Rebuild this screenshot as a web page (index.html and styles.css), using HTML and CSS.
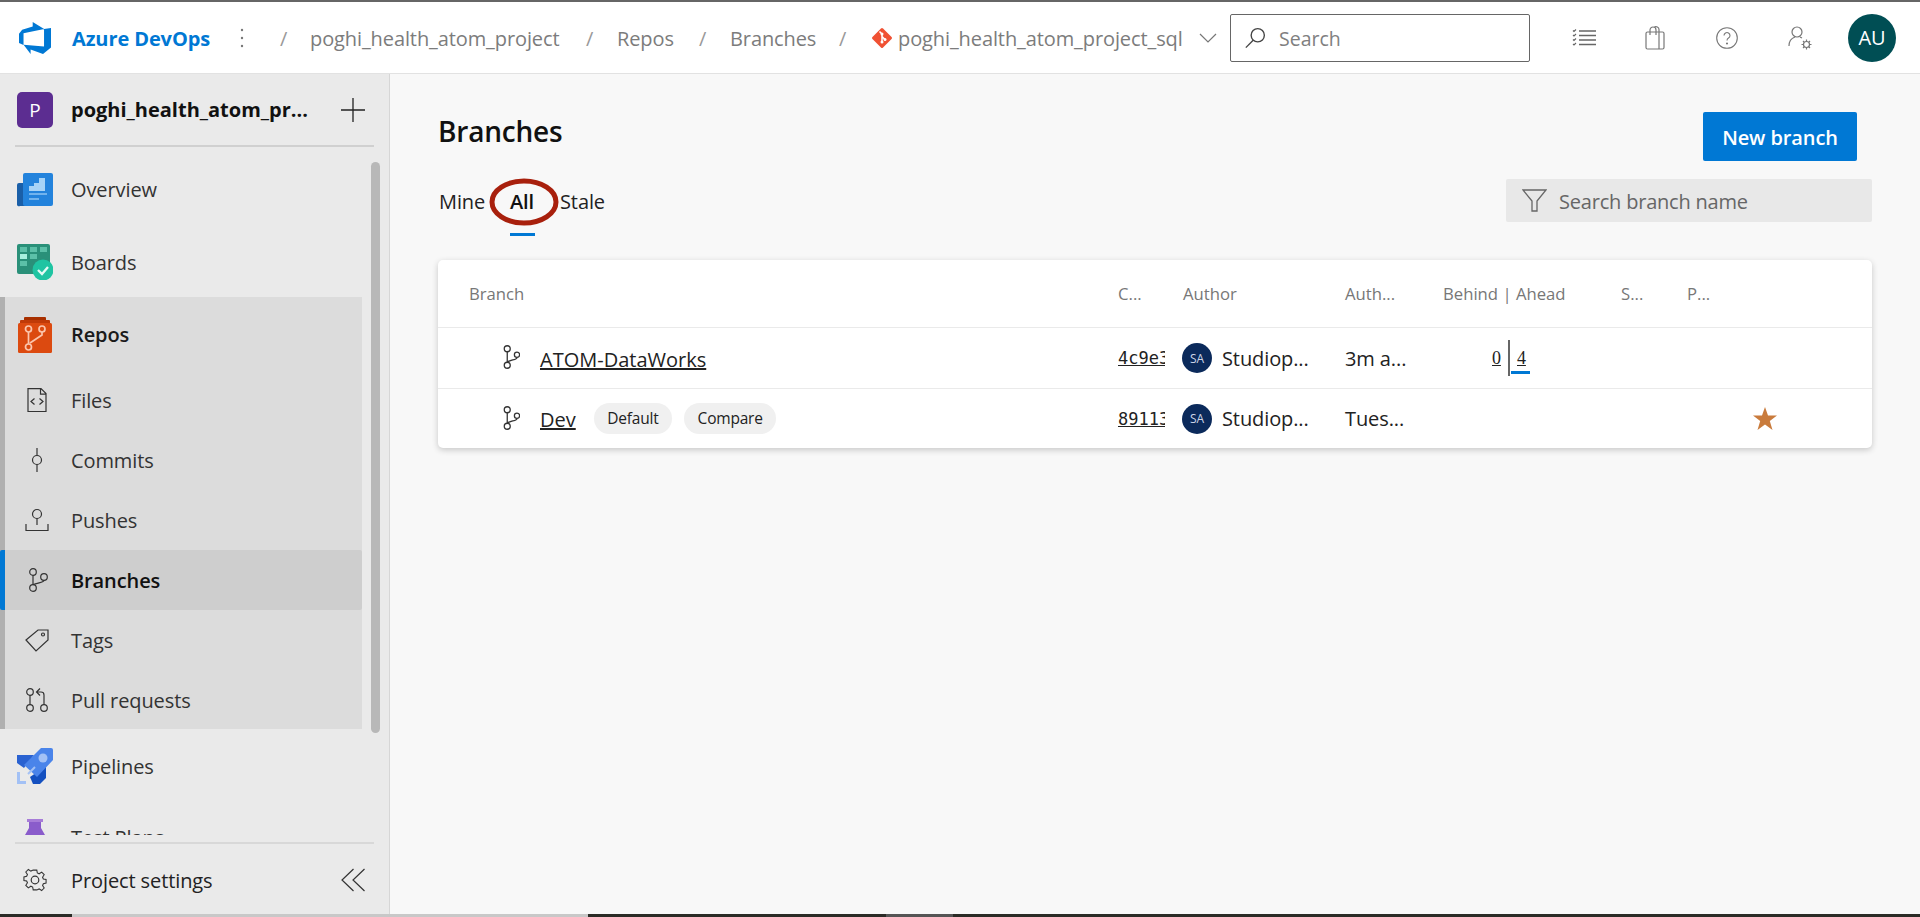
FILE: index.html
```html
<!DOCTYPE html>
<html lang="en">
<head>
<meta charset="utf-8">
<title>Branches - Repos</title>
<link rel="stylesheet" href="styles.css">
</head>
<body>
<header class="topbar">
  <svg class="logo" viewBox="0 0 18 18"><path d="M17 4v9.74l-4 3.28-6.2-2.26V17L3.29 12.41l10.23.8V4.44Zm-3.41.49L7.85 1V3.29L2.58 4.84 1 6.87v4.61l2.26 1V6.57Z"/></svg>
  <span class="brand">Azure DevOps</span>
  <svg class="kebab" viewBox="0 0 4 20"><circle cx="2" cy="2" r="1.2"/><circle cx="2" cy="10" r="1.2"/><circle cx="2" cy="18" r="1.2"/></svg>
  <nav class="crumbs">
    <span class="sep">/</span><span class="crumb c-project">poghi_health_atom_project</span>
    <span class="sep">/</span><span class="crumb c-repos">Repos</span>
    <span class="sep">/</span><span class="crumb c-branches">Branches</span>
    <span class="sep">/</span>
    <svg class="git" viewBox="0 0 22 22"><rect x="3.500" y="3.500" width="15" height="15" rx="1.500" transform="rotate(45 11 11)" fill="#f05133"/><path d="M8.500 4.500 11 7v8M11 9.500l3 3" fill="none" stroke="#fff" stroke-width="1.500"/><circle cx="11" cy="7" r="1.500" fill="#fff"/><circle cx="11" cy="15" r="1.500" fill="#fff"/><circle cx="14" cy="12.500" r="1.500" fill="#fff"/></svg>
    <span class="crumb c-repo">poghi_health_atom_project_sql</span>
    <svg class="chev" viewBox="0 0 18 10"><path d="M1 1l8 8 8-8" fill="none" stroke="#777" stroke-width="1.200"/></svg>
  </nav>
  <div class="searchbox">
    <svg class="mag" viewBox="0 0 24 24"><circle cx="15" cy="9" r="7.200" fill="none" stroke="#444" stroke-width="1.500"/><path d="M10 14.500 2 22.500" stroke="#444" stroke-width="1.500"/></svg>
    <span>Search</span>
  </div>
  <svg class="ti ti-list" viewBox="0 0 24 18" fill="none" stroke="#666" stroke-width="1.100"><path d="M7 2h17M7 6.500h17M7 11h17M7 15.500h17" stroke-width="1.300"/><path d="M1 1.500l1 1 2-2M1 6l1 1 2-2M1 10.500l1 1 2-2M1 15l1 1 2-2"/></svg>
  <svg class="ti ti-bag" viewBox="0 0 20 24" fill="none" stroke="#777" stroke-width="1.200"><rect x="1" y="6" width="18" height="17" rx="1.500"/><path d="M14 6v17M5 9V4a3 3 0 0 1 6 0v5M9 1.500a3 3 0 0 1 5 2.500v3"/></svg>
  <svg class="ti ti-help" viewBox="0 0 22 22" fill="none" stroke="#777" stroke-width="1.100"><circle cx="11" cy="11" r="10.300"/><path d="M8 8.500a3 3 0 1 1 4.500 2.600c-1 .6-1.500 1.200-1.500 2.400"/><circle cx="11" cy="16.500" r=".5" fill="#777"/></svg>
  <svg class="ti ti-user" viewBox="0 0 25 24" fill="none" stroke="#777" stroke-width="1.200"><circle cx="9" cy="6" r="5"/><path d="M1 20c0-5 3-8 6-9M12 11l2 1"/><circle cx="18.500" cy="18.500" r="3"/><path d="M18.500 13.500v2M18.500 21.500v2M13.500 18.500h2M21.500 18.500h2M15 15l1.300 1.300M20.700 20.700 22 22M22 15l-1.300 1.300M16.300 20.700 15 22"/></svg>
  <div class="avatar">AU</div>
</header>

<div class="shell">
  <aside class="sidebar">
    <div class="proj">
      <div class="tile">P</div>
      <div class="proj-name">poghi_health_atom_pr...</div>
      <svg class="plus" viewBox="0 0 24 24"><path d="M12 0v24M0 12h24" stroke="#222" stroke-width="1.300"/></svg>
    </div>
    <div class="nav-wrap">
      <div class="navscroll">
        <a class="hub hub-overview">
          <svg class="hubicon" viewBox="0 0 36 34"><path d="M2 10h8v23H3a2 2 0 0 1-3-2V12a2 2 0 0 1 2-2Z" fill="#1a5fa8"/><rect x="6" y="0" width="30" height="33" rx="2" fill="#2383dc"/><path d="M12 18v-5h5v-3h5V5h6v13Z" fill="#a6d3f7"/><path d="M12 21h18M12 26h10" stroke="#8cc4f2" stroke-width="1.300"/></svg>
          <span>Overview</span>
        </a>
        <a class="hub hub-boards">
          <svg class="hubicon" viewBox="0 0 36 36"><rect x="0" y="0" width="33" height="30" rx="2" fill="#2a9079"/><g fill="#5cc0a8"><rect x="3" y="3" width="7" height="5"/><rect x="13" y="3" width="7" height="5"/><rect x="23" y="3" width="7" height="5"/><rect x="13" y="10" width="7" height="5"/><rect x="3" y="17" width="7" height="5"/></g><rect x="3" y="10" width="7" height="5" fill="#a8f0de"/><circle cx="26" cy="26" r="10.500" fill="#1fc4a2"/><path d="M21 26l4 4 6-7" fill="none" stroke="#e4fbf5" stroke-width="2.300"/></svg>
          <span>Boards</span>
        </a>
        <section class="group">
          <a class="hub hub-repos">
            <svg class="hubicon" viewBox="0 0 34 36"><rect x="6" y="0" width="22" height="6" rx="1" fill="#a83000"/><rect x="2" y="3" width="30" height="6" rx="1" fill="#c03a08"/><rect x="0" y="6" width="34" height="30" rx="1.500" fill="#dc4a10"/><g fill="none" stroke="#fbc5ad" stroke-width="1.700"><circle cx="10.500" cy="12" r="3"/><circle cx="24" cy="12" r="3"/><circle cx="10.500" cy="30" r="3"/><path d="M10.500 15v12M24 15v3l-12 8"/></g></svg>
            <span>Repos</span>
          </a>
          <a class="sub">
            <svg class="subicon" viewBox="0 0 24 24" fill="none" stroke="#333" stroke-width="1.200"><path d="M3 .6h13l5 5v18H3ZM15.500.6v5.500H21"/><path d="M9.500 10.500 6 13.500l3.500 3M14.500 10.500l3.500 3-3.500 3"/></svg>
            <span>Files</span>
          </a>
          <a class="sub">
            <svg class="subicon" viewBox="0 0 24 24" fill="none" stroke="#333" stroke-width="1.200"><circle cx="12" cy="12" r="4.500"/><path d="M12 0v7.500M12 16.500V24"/></svg>
            <span>Commits</span>
          </a>
          <a class="sub">
            <svg class="subicon" viewBox="0 0 24 24" fill="none" stroke="#333" stroke-width="1.200"><circle cx="12" cy="6" r="4.500"/><path d="M12 10.500V17M1 16v6.500h22V16"/></svg>
            <span>Pushes</span>
          </a>
          <a class="sub is-active">
            <svg class="subicon" viewBox="0 0 24 24" fill="none" stroke="#333" stroke-width="1.200"><circle cx="8" cy="4" r="3.300"/><circle cx="8" cy="20" r="3.300"/><circle cx="19" cy="9" r="3.300"/><path d="M8 7.300v9.400M19 12.300c0 2.700-7 2-11 4.400"/></svg>
            <span>Branches</span>
          </a>
          <a class="sub">
            <svg class="subicon" viewBox="0 0 24 24" fill="none" stroke="#333" stroke-width="1.200"><path d="M1 12 13 2h10v10L11 23Z"/><circle cx="18" cy="6.500" r="1.500"/></svg>
            <span>Tags</span>
          </a>
          <a class="sub">
            <svg class="subicon" viewBox="0 0 24 24" fill="none" stroke="#333" stroke-width="1.200"><circle cx="5" cy="4" r="3.300"/><circle cx="5" cy="20" r="3.300"/><circle cx="19" cy="20" r="3.300"/><path d="M5 7.300v9.400M19 16.700V7c0-2-1-3-3-3h-4M15 .5 11.500 4 15 7.500"/></svg>
            <span>Pull requests</span>
          </a>
        </section>
        <a class="hub hub-pipelines">
          <svg class="hubicon" viewBox="0 0 36 36"><path d="M0 7H17L7 20 0 15Z" fill="#2a62d1"/><path d="M29 18V30L23 36H16L13 29Z" fill="#1450c0"/><path d="M24 0H34Q36 0 36 2V12L20 29 7 17Z" fill="#4a84ea"/><circle cx="26" cy="10" r="4.500" fill="#a3c1f5"/><path d="M11 26 18 19" stroke="#a3c1f5" stroke-width="2"/><path d="M0 24H3V33H9V36H0Z" fill="#a3c1f5"/></svg>
          <span>Pipelines</span>
        </a>
        <a class="hub hub-test">
          <svg class="hubicon" viewBox="0 0 20 36"><rect x="2" y="0" width="16" height="3" fill="#a77cd8"/><path d="M4 3H16V9L20 16V36H0V16L4 9Z" fill="#8a5ccb"/></svg>
          <span>Test Plans</span>
        </a>
      </div>
      <div class="sidebar-scroll"></div>
    </div>
    <div class="sidefoot">
      <a class="settings">
        <svg class="gear" viewBox="0 0 24 24" fill="none" stroke="#333" stroke-width="1.200"><circle cx="12" cy="12" r="3.800"/><path d="M10 1h4l.6 3.200 2 .9 2.800-1.800 2.800 2.800-1.800 2.800.9 2 3 .6v4l-3 .6-.9 2 1.800 2.800-2.800 2.800-2.800-1.800-2 .9L14 23h-4l-.6-3.200-2-.9-2.800 1.800-2.800-2.800 1.800-2.800-.9-2-3-.6v-4l3-.6.9-2-1.800-2.800 2.800-2.800 2.800 1.800 2-.9Z" transform="translate(1.200 1.200) scale(.9)"/></svg>
        <span>Project settings</span>
      </a>
      <svg class="collapse" viewBox="0 0 24 24" fill="none" stroke="#333" stroke-width="1.200"><path d="M12.500 1 1 12l11.500 11M23.500 1 12 12l11.500 11"/></svg>
    </div>
  </aside>

  <main class="main">
    <div class="title-row">
      <h1>Branches</h1>
      <button class="primary">New branch</button>
    </div>
    <div class="tabs-row">
      <div class="tabs">
        <span class="tab">Mine</span>
        <span class="tab is-current">All</span>
        <span class="tab">Stale</span>
        <svg class="ring" viewBox="0 0 70 48"><ellipse cx="35" cy="24" rx="32" ry="21" fill="none" stroke="#a8200d" stroke-width="5"/></svg>
      </div>
      <div class="filter">
        <svg class="funnel" viewBox="0 0 25 23" fill="none" stroke="#666" stroke-width="1.300"><path d="M1 1h23l-9 11v10h-5V12Z"/></svg>
        <span>Search branch name</span>
      </div>
    </div>
    <section class="card">
      <div class="row row-head">
        <span>Branch</span><span>C...</span><span>Author</span><span>Auth...</span><span>Behind | Ahead</span><span>S...</span><span>P...</span>
      </div>
      <div class="row row-body">
        <div class="cell-branch">
          <svg class="brico" viewBox="0 0 24 32" fill="none" stroke="#333" stroke-width="1.700"><circle cx="7" cy="5" r="4"/><circle cx="7" cy="27" r="4"/><circle cx="20" cy="13" r="3.500"/><path d="M7 9v14M20 16.500c0 4-9 2.500-13 6.500"/></svg>
          <a class="blink">ATOM-DataWorks</a>
        </div>
        <a class="sha">4c9e3</a>
        <div class="person"><span class="sa">SA</span><span>Studiop...</span></div>
        <span class="when">3m a...</span>
        <div class="ba"><a class="n">0</a><i class="bar"></i><a class="n ahead">4</a></div>
        <span></span><span></span>
      </div>
      <div class="row row-body row-last">
        <div class="cell-branch">
          <svg class="brico" viewBox="0 0 24 32" fill="none" stroke="#333" stroke-width="1.700"><circle cx="7" cy="5" r="4"/><circle cx="7" cy="27" r="4"/><circle cx="20" cy="13" r="3.500"/><path d="M7 9v14M20 16.500c0 4-9 2.500-13 6.500"/></svg>
          <a class="blink">Dev</a>
          <span class="pill">Default</span>
          <span class="pill pill-compare">Compare</span>
        </div>
        <a class="sha">89113</a>
        <div class="person"><span class="sa">SA</span><span>Studiop...</span></div>
        <span class="when">Tues...</span>
        <span></span><span></span>
        <div class="starcell"><svg class="star" viewBox="0 0 24 23"><path d="M12 0l3 8.500h9l-7.200 5.500 2.700 9L12 17.500 4.500 23l2.700-9L0 8.500h9Z" fill="#c97b3c"/></svg></div>
      </div>
    </section>
  </main>
</div>
<footer class="taskbar"><i class="tb-a"></i><i class="tb-b"></i><i class="tb-c"></i><i class="tb-d"></i><i class="tb-e"></i></footer>
</body>
</html>
```

FILE: styles.css
```css
* { box-sizing: border-box; }
html, body { margin: 0; height: 917px; overflow: hidden; }
body {
  display: flex;
  flex-direction: column;
  font-family: "Open Sans", "Noto Sans", sans-serif;
  color: #222;
  background: #f8f8f8;
}
a { color: inherit; }

/* top bar */
.topbar {
  flex: 0 0 74px;
  display: flex;
  align-items: center;
  background: #fff;
  border-top: 2px solid #666;
  border-bottom: 1px solid #e2e2e2;
}
.logo { width: 36px; height: 36px; fill: #0078d4; margin-left: 17px; flex: none; }
.brand { margin-left: 19px; width: 168px; padding-top: 2px; font-size: 20px; font-weight: 700; color: #0078d4; letter-spacing: -.1px; white-space: nowrap; }
.kebab { width: 4px; height: 20px; fill: #777; flex: none; }
.crumbs { display: flex; align-items: center; color: #7c7c7c; font-size: 20px; letter-spacing: -.1px; }
.sep { color: #999; width: 10px; margin-left: -2px; margin-right: 2px; padding-top: 2px; }
.crumbs .sep:first-child { margin-left: 36px; }
.crumb { white-space: nowrap; padding-top: 2px; }
.c-project { margin-left: 18px; width: 278px; }
.c-repos { margin-left: 19px; width: 84px; }
.c-branches { margin-left: 19px; width: 111px; }
.git { width: 22px; height: 22px; margin-left: 20px; flex: none; }
.c-repo { margin-left: 5px; width: 298px; }
.chev { width: 18px; height: 10px; margin-left: 3px; flex: none; }
.searchbox {
  width: 300px; height: 48px; margin-left: 13px;
  display: flex; align-items: center; gap: 13px; padding-left: 13px;
  border: 1px solid #666; border-radius: 2px;
  color: #808080; font-size: 19.500px; flex: none;
}
.searchbox span { padding-top: 2px; }
.mag { width: 22px; height: 22px; }
.ti { flex: none; }
.ti-list { width: 24px; height: 18px; margin-left: 42px; }
.ti-bag { width: 20px; height: 24px; margin-left: 49px; }
.ti-help { width: 22px; height: 22px; margin-left: 51px; }
.ti-user { width: 25px; height: 24px; margin-left: 50px; }
.avatar {
  width: 48px; height: 48px; margin-left: 35px; border-radius: 50%;
  background: #004e54; color: #fff; font-size: 20px;
  display: flex; align-items: center; justify-content: center; flex: none;
}

.shell { flex: 1; min-height: 0; display: flex; }

/* sidebar */
.sidebar {
  width: 390px; flex: none;
  display: flex; flex-direction: column;
  background: #eaeaea;
  border-right: 1px solid #d6d6d6;
}
.proj {
  height: 73px; margin: 0 15px; flex: none;
  display: flex; align-items: center;
  border-bottom: 2px solid #d0d0d0;
}
.tile {
  width: 36px; height: 36px; margin-left: 2px; border-radius: 5px;
  background: #5c2d91; color: #fff; font-size: 19px;
  display: flex; align-items: center; justify-content: center; flex: none;
}
.proj-name { margin-left: 18px; width: 270px; font-size: 20px; font-weight: 700; color: #111; white-space: nowrap; }
.plus { width: 24px; height: 24px; flex: none; }
.nav-wrap { position: relative; height: 695px; flex: none; overflow: hidden; }
.navscroll { height: 688px; overflow: hidden; padding-top: 1px; }
.sidebar-scroll {
  position: absolute; left: 371px; top: 15px; width: 9px; height: 571px;
  background: #b8b8b8; border-radius: 5px;
}
.hub, .sub { display: flex; align-items: center; font-size: 20px; color: #333; letter-spacing: -.1px; }
.hub { padding-left: 17px; }
.hub > span { margin-left: 18px; }
.hubicon { width: 36px; height: 36px; flex: none; }
.hub-overview { height: 74px; padding-top: 9px; }
.hub-boards { height: 75px; padding-top: 5px; }
.group {
  width: 362px; height: 432px;
  background: #dcdcdc;
  border-left: 5px solid #b0b0b0;
}
.hub-repos { height: 73px; padding-left: 13px; padding-top: 2px; color: #1a1a1a; font-weight: 600; }
.hub-repos .hubicon { width: 34px; height: 36px; }
.hub-repos > span { margin-left: 19px; }
.sub { height: 60px; padding-left: 20px; }
.sub > span { margin-left: 22px; }
.subicon { width: 24px; height: 24px; flex: none; }
.is-active {
  margin-left: -5px; padding-left: 20px;
  background: #cecece; color: #111; font-weight: 600;
  border-left: 5px solid #0078d4;
  border-radius: 2px;
}
.hub-pipelines { height: 74px; }
.hub-test { height: 60px; padding-left: 25px; padding-top: 8px; }
.hub-test .hubicon { width: 20px; height: 36px; }
.hub-test > span { margin-left: 26px; }
.sidefoot {
  flex: 1; margin: 0 15px; padding: 2px 9px 0 8px;
  display: flex; align-items: center; justify-content: space-between;
  border-top: 2px solid #d8d8d8;
}
.settings { display: flex; align-items: center; font-size: 20px; color: #222; letter-spacing: -.1px; }
.settings span { margin-left: 24px; }
.gear { width: 24px; height: 24px; }
.collapse { width: 24px; height: 24px; }

/* main */
.main { flex: 1; min-width: 0; padding: 38px 48px 0; }
.title-row { display: flex; justify-content: space-between; align-items: flex-start; }
h1 { margin: -1px 0 0; font-size: 28px; line-height: 40px; font-weight: 600; color: #111; letter-spacing: -.2px; }
.primary {
  width: 154px; height: 49px; margin-right: 15px; padding: 2px 0 0;
  border: 0; border-radius: 2px;
  background: #0078d4; color: #fff;
  font: 600 20px "Open Sans", sans-serif; letter-spacing: -.1px;
}
.tabs-row { display: flex; justify-content: space-between; margin-top: 18px; height: 57px; }
.tabs { position: relative; display: flex; height: 57px; padding-left: 1px; font-size: 20px; color: #222; letter-spacing: -.1px; }
.tab { height: 43px; line-height: 46px; }
.tab:nth-child(1) { width: 71px; }
.tab:nth-child(2) { width: 50px; }
.is-current { color: #111; font-weight: 600; }
.is-current::after { content: ""; display: block; width: 25px; height: 3px; margin-top: 8px; background: #0078d4; }
.ring { position: absolute; left: 51px; top: -1px; width: 70px; height: 48px; pointer-events: none; }
.filter {
  width: 366px; height: 43px;
  display: flex; align-items: center; gap: 12px; padding-left: 16px;
  background: #e8e8e8; border-radius: 2px;
  color: #666; font-size: 20px; letter-spacing: -.2px;
}
.filter span { padding-top: 2px; }
.funnel { width: 25px; height: 23px; }
.card {
  margin-top: 24px; height: 188px;
  background: #fff; border-radius: 5px;
  box-shadow: 0 2px 6px rgba(0,0,0,.2);
}
.row {
  display: grid;
  grid-template-columns: 649px 65px 162px 98px 178px 66px 1fr;
  align-items: center;
  padding-left: 31px;
  border-bottom: 1px solid #eaeaea;
}
.row-head { height: 68px; font-size: 16.700px; font-weight: 500; color: #777; }
.row-body { height: 61px; font-size: 20px; color: #222; letter-spacing: -.1px; }
.row-last { height: 59px; border-bottom: 0; }
.cell-branch { display: flex; align-items: center; }
.brico { width: 18px; height: 24px; margin: -2px 0 0 33px; flex: none; }
.blink { margin: 2px 0 0 20px; text-decoration: underline; font-size: 20px; color: #222; letter-spacing: 0; }
.pill {
  height: 31px; line-height: 31px; margin-left: 18px; padding: 0 13.500px;
  border-radius: 16px; background: #f0f0f0; font-size: 15.500px; letter-spacing: -.2px;
}
.pill-compare { margin-left: 12px; }
.sha {
  width: 47px; overflow: hidden; white-space: nowrap;
  font: 17px "DejaVu Sans Mono", monospace; letter-spacing: 0;
  text-decoration: underline; color: #222;
}
.person { display: flex; align-items: center; gap: 10px; margin-left: -1px; }
.sa {
  width: 30px; height: 30px; border-radius: 50%;
  background: #0b2a5b; color: #cdd6e6; font-size: 12px; letter-spacing: 0;
  display: flex; align-items: center; justify-content: center;
}
.ba { display: flex; align-items: center; height: 36px; padding-left: 49px; font: 18px "Liberation Serif", serif; }
.n { width: 10px; text-decoration: underline; }
.bar { width: 2px; height: 36px; margin: 0 7px 0 6px; background: #666; }
.ahead { position: relative; }
.ahead::after { content: ""; position: absolute; left: -6px; top: 23px; width: 19px; height: 3px; background: #0078d4; }
.starcell { padding-left: 66px; display: flex; }
.star { width: 24px; height: 23px; }

/* bottom strip */
.taskbar { flex: 0 0 3px; display: flex; background: #2b2b26; }
.taskbar i { display: block; height: 3px; }
.tb-a { width: 72px; }
.tb-b { width: 516px; background: #c8c8c8; }
.tb-c { width: 298px; }
.tb-d { width: 67px; background: #555; }
.tb-e { flex: 1; }
```
